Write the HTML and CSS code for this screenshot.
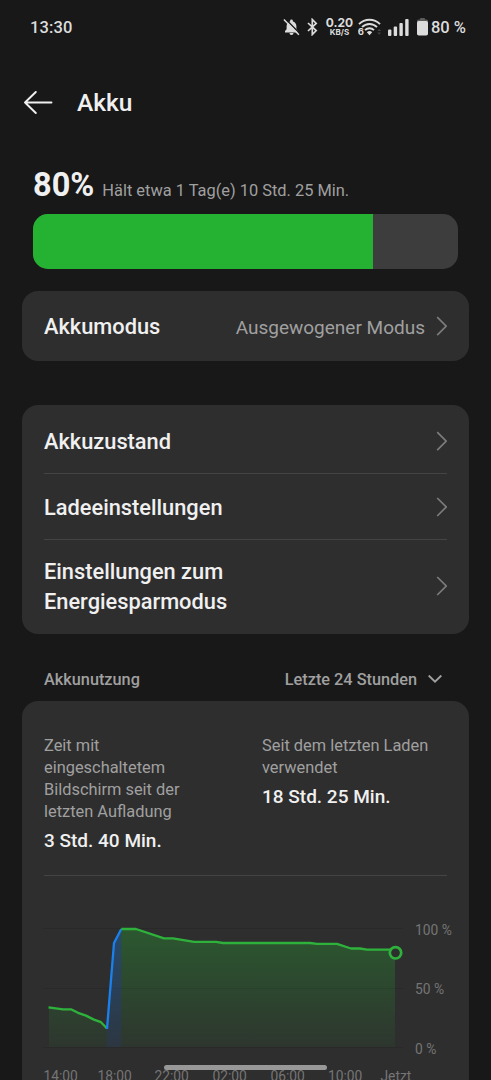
FILE: index.html
```
<!DOCTYPE html>
<html lang="de">
<head>
    <meta charset="UTF-8">
    <meta name="viewport" content="width=device-width, initial-scale=1">
    <title>Akku</title>
    <link rel="stylesheet" href="styles.css">
</head>

<body>
<div class="status-bar">
    <span class="clock">13:30</span>
    <div class="status-icons">
        <svg class="ico-bell" width="17" height="18" viewBox="0 0 17 18">
            <path d="M2 14.400v-1.400l1.600-1.700V8.200c0-2.500 1.500-4.300 3.500-4.800V3a1.400 1.400 0 0 1 2.800 0v.4c2 .5 3.500 2.300 3.500 4.800v3.100l1.600 1.700v1.400zM6.500 14.900h4a2 2 0 0 1-4 0z" fill="#dcdcdc"/>
            <path d="M2 .400l15 15.400" stroke="#181818" stroke-width="1.400"/>
            <path d="M.900 1.400l15 15.400" stroke="#dcdcdc" stroke-width="1.500"/>
        </svg>
        <svg class="ico-bt" width="11" height="18" viewBox="0 0 11 18">
            <path d="M1 5l8.200 7.600-3.900 3.900V1.500l3.900 3.900L1 13" fill="none" stroke="#dcdcdc" stroke-width="1.700"/>
        </svg>
        <div class="net-speed"><b>0.20</b><span>KB/S</span></div>
        <svg class="ico-wifi" width="24" height="18" viewBox="0 0 24 18">
            <g fill="none" stroke="#dcdcdc" stroke-width="1.900">
                <path d="M1 6.200a14.500 14.500 0 0 1 21 0"/>
                <path d="M4 9.200a10.300 10.300 0 0 1 15 0"/>
                <path d="M7 12.200a6.300 6.300 0 0 1 9 0"/>
            </g>
            <path d="M8.800 14.300a4.100 4.100 0 0 1 5.400 0l-2.700 2.900z" fill="#dcdcdc"/>
            <rect x="-1" y="9.700" width="6.600" height="9" fill="#181818"/>
            <text x="-.2" y="17.300" class="wifi-gen">6</text>
            <path d="M19.300 13l1.900-2.200 1.900 2.200zM19.300 14.600l1.900 2.200 1.900-2.200z" fill="#414141"/>
        </svg>
        <svg class="ico-signal" width="21" height="17" viewBox="0 0 21 17">
            <g fill="#dcdcdc">
                <rect x="0" y="10.500" width="3.400" height="6.500" rx="1"/>
                <rect x="5.700" y="7.500" width="3.400" height="9.500" rx="1"/>
                <rect x="11.400" y="4" width="3.400" height="13" rx="1"/>
                <rect x="17.200" y="0" width="3.400" height="17" rx="1"/>
            </g>
        </svg>
        <svg class="ico-batt" width="11" height="18" viewBox="0 0 11 18">
            <path d="M3 1.500V1q0-1 1-1h3q1 0 1 1v.5h1.500q1.500 0 1.500 1.500v3H0V3q0-1.500 1.500-1.500z" fill="#5c5c5c"/>
            <rect x="0" y="3" width="11" height="14.500" rx="1.800" fill="#dcdcdc"/>
        </svg>
        <span class="batt-num">80 %</span>
    </div>
</div>

<div class="title-bar">
    <svg width="29" height="24" viewBox="0 0 29 24">
        <path d="M11.800 1L1 11.500 11.800 22M1 11.500h26.500" fill="none" stroke="#f0f0f0" stroke-width="1.900" stroke-linecap="round" stroke-linejoin="round"/>
    </svg>
    <h1>Akku</h1>
</div>

<div class="level">
    <div class="level-text"><b>80%</b><span>Hält etwa 1 Tag(e) 10 Std. 25 Min.</span></div>
    <div class="level-bar"><div class="level-fill" style="width: 80%"></div></div>
</div>

<div class="card mode">
    <div class="row">
        <span class="name">Akkumodus</span>
        <span class="value">Ausgewogener Modus</span>
        <svg class="arrow" width="12" height="20" viewBox="0 0 12 20"><path d="M2.200 1.200l9 9-9 9"/></svg>
    </div>
</div>

<div class="card settings">
    <div class="row">
        <span class="name">Akkuzustand</span>
        <svg class="arrow" width="12" height="20" viewBox="0 0 12 20"><path d="M2.200 1.200l9 9-9 9"/></svg>
    </div>
    <div class="row">
        <span class="name">Ladeeinstellungen</span>
        <svg class="arrow" width="12" height="20" viewBox="0 0 12 20"><path d="M2.200 1l9 9-9 9"/></svg>
    </div>
    <div class="row tall">
        <span class="name">Einstellungen zum<br>Energiesparmodus</span>
        <svg class="arrow" width="12" height="20" viewBox="0 0 12 20"><path d="M2.200 1l9 9-9 9"/></svg>
    </div>
</div>

<div class="usage-head">
    <span>Akkunutzung</span>
    <div class="range">
        <span>Letzte 24 Stunden</span>
        <svg width="14" height="9" viewBox="0 0 14 9"><path d="M.700 .5L7 6.700 13.300 .5" fill="none" stroke="#a0a0a0" stroke-width="1.900"/></svg>
    </div>
</div>

<div class="card usage">
    <div class="stats">
        <div class="stat">
            <p>Zeit mit<br>eingeschaltetem<br>Bildschirm seit der<br>letzten Aufladung</p>
            <b>3 Std. 40 Min.</b>
        </div>
        <div class="stat">
            <p>Seit dem letzten Laden<br>verwendet</p>
            <b>18 Std. 25 Min.</b>
        </div>
    </div>
    <svg class="chart" width="447" height="204" viewBox="0 0 447 204">
        <defs>
            <linearGradient id="green" gradientUnits="userSpaceOnUse" x1="0" y1="53" x2="0" y2="171">
                <stop offset="0" stop-color="#25b232" stop-opacity=".32"/>
                <stop offset="1" stop-color="#25b232" stop-opacity=".06"/>
            </linearGradient>
            <linearGradient id="blue" gradientUnits="userSpaceOnUse" x1="0" y1="53" x2="0" y2="171">
                <stop offset="0" stop-color="#1a80ec" stop-opacity=".34"/>
                <stop offset="1" stop-color="#1a80ec" stop-opacity=".1"/>
            </linearGradient>
        </defs>
        <g class="grid"><path d="M21 52.500h360M21 112.500h360M21 171.500h360"/></g>
        <path d="M27 131.300l14 2h8l7 3.500 8 2.800 8 4 7 2.600 6 6V171H27z" fill="url(#green)"/>
        <path d="M85 152.500l7-85.500 7.300-14V171H85z" fill="url(#blue)"/>
        <path d="M99.300 53H114l28 9.300h9l21 3.500h22l7 1.200h87l7 .9h20l14 4.600h9l7 1.200h28V171H99.300z" fill="url(#green)"/>
        <g class="line">
            <path d="M26.500 131.300l14.500 2h8l7 3.500 8 2.800 8 4 7 2.600 6 6.300"/>
            <path class="charge" d="M85 153l7-86 7.300-14"/>
            <path d="M99.300 53H114l28 9.300h9l21 3.500h22l7 1.200h87l7 .9h20l14 4.600h9l7 1.200h25"/>
            <circle cx="373.500" cy="76.800" r="5.700" fill="#2e2e2e"/>
        </g>
        <g class="axis">
            <text x="393" y="59">100 %</text>
            <text x="393" y="118">50 %</text>
            <text x="393" y="177.500">0 %</text>
            <text x="21.500" y="205">14:00</text>
            <text x="75.500" y="205">18:00</text>
            <text x="132.500" y="205">22:00</text>
            <text x="190.500" y="205">02:00</text>
            <text x="248.500" y="205">06:00</text>
            <text x="306" y="205">10:00</text>
            <text x="358.500" y="205">Jetzt</text>
        </g>
    </svg>
</div>

<div class="home-bar"></div>
</body>
</html>
```
FILE: styles.css
```
*{box-sizing: border-box}
body,h1,p{margin: 0; padding: 0}
body{height: 1080px; overflow: hidden; background: #181818; color: #f0f0f0; font-family: Roboto, "Liberation Sans", sans-serif}
svg{display: block; flex: none}
b,h1{font-weight: 500}

.status-bar{display: flex; justify-content: space-between; align-items: center; height: 54px; padding: 0 25px 0 30px; color: #dcdcdc}
.clock{font-size: 16.500px; font-weight: 500; letter-spacing: .1px}
.status-icons{display: flex; align-items: center}
.ico-bt{margin-left: 7px}
.net-speed{display: flex; flex-direction: column; align-items: center; width: 27px; margin-left: 8px; font-family: Inter, sans-serif}
.net-speed b{font-size: 12px; line-height: 10px; font-weight: 700}
.net-speed span{font-size: 8px; line-height: 8px; font-weight: 700}
.ico-wifi{margin-left: 5px}
.wifi-gen{font: 700 9.500px Inter, sans-serif; fill: #dcdcdc}
.ico-signal{margin-left: 6px}
.ico-batt{margin-left: 8px}
.batt-num{margin-left: 3px; font-size: 16.500px; font-weight: 500; white-space: nowrap}

.title-bar{display: flex; align-items: center; height: 97px; padding-left: 24px}
.title-bar h1{margin-left: 24px; padding-top: 1px; font-size: 24.500px; line-height: 30px}

.level{padding: 15px 33px 0}
.level-text{display: flex; align-items: baseline; height: 48px}
.level-text b{font-size: 32.500px; line-height: 38px; font-weight: 700}
.level-text span{margin-left: 8px; font-size: 16.400px; color: #a0a0a0}
.level-bar{height: 55px; border-radius: 15px; background: #3d3d3d; overflow: hidden}
.level-fill{height: 100%; background: #25b232}

.card{margin: 0 22px; border-radius: 16px; background: #2e2e2e}
.row{display: flex; align-items: center; height: 66px}
.name{flex: 1; padding-top: 2px; font-size: 21.800px; line-height: 30px; font-weight: 500}
.value{padding-top: 2px; font-size: 19px; color: #a0a0a0}
.arrow{margin-left: 10px}
.arrow path{fill: none; stroke: #7c7c7c; stroke-width: 1.700}
.mode{margin-top: 22px; padding: 2px 22px}
.settings{margin-top: 44px; padding: 3px 22px}
.settings .row{border-bottom: 1px solid #444}
.settings .tall{height: 91px; border-bottom: none}

.usage-head{display: flex; justify-content: space-between; align-items: center; height: 67px; padding: 23px 49px 0 44px; font-size: 16.300px; font-weight: 500; color: #a0a0a0}
.range{display: flex; align-items: center}
.range svg{margin-left: 11px}

.usage{height: 400px; border-radius: 16px 16px 0 0}
.stats{display: flex; height: 175px; margin: 0 22px; padding-top: 34px; border-bottom: 1px solid #444}
.stat{flex: none; width: 218px}
.stat p{font-size: 16.400px; line-height: 22px; color: #a0a0a0}
.stat b{display: block; margin-top: 6px; font-size: 19px; line-height: 24px; white-space: nowrap}
.stat:last-child{width: 185px}

.grid path{stroke: #292929; fill: none}
.line{fill: none; stroke: #2fb23c; stroke-width: 2.300; stroke-linejoin: round}
.line .charge{stroke: #1a80ec}
.line circle{stroke-width: 2.700}
.axis{font-size: 13.800px; fill: #757575}

.home-bar{position: fixed; left: 164px; bottom: 10px; width: 163px; height: 5px; border-radius: 3px; background: #989898}
```
